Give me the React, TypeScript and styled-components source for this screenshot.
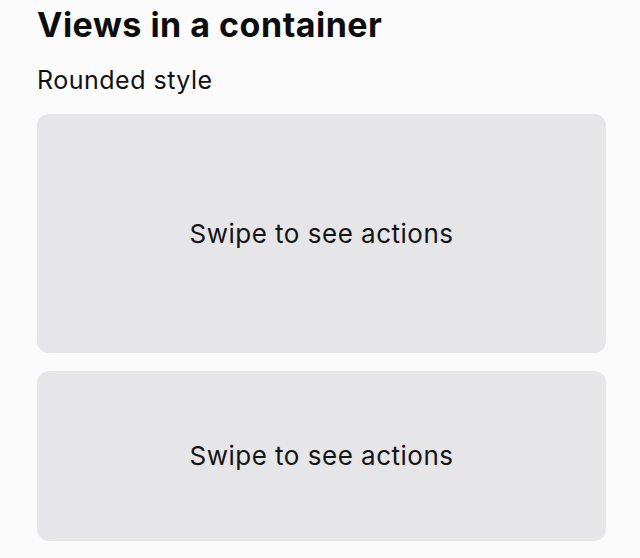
import React from "react";
import styled, { createGlobalStyle } from "styled-components";

const Global = createGlobalStyle`
  html, body {
    margin: 0;
    padding: 0;
    background: #fbfbfb;
  }
  body {
    font-family: Inter, "Noto Sans", sans-serif;
    color: #111111;
  }
`;

const Page = styled.div`
  display: flex;
  flex-direction: column;
  padding: 5px 34px 0 37px;
  box-sizing: border-box;
  width: 640px;
`;

const Title = styled.h1`
  margin: 0;
  font-size: 34px;
  font-weight: 700;
  letter-spacing: 0.5px;
  line-height: 40px;
  color: #0d0d0d;
`;

const Subtitle = styled.h2`
  margin: 20px 0 0;
  font-size: 25px;
  font-weight: 400;
  line-height: 30px;
  letter-spacing: 0.5px;
  color: #111;
`;

const List = styled.div`
  display: flex;
  flex-direction: column;
  gap: 18px;
  margin-top: 19px;
`;

const Card = styled.div<{ $height: number }>`
  height: ${(p) => p.$height}px;
  background: #e6e5e8;
  border-radius: 12px;
  display: flex;
  align-items: center;
  justify-content: center;
`;

const CardText = styled.span`
  font-size: 26px;
  font-weight: 400;
  letter-spacing: 0.5px;
  line-height: 30px;
  color: #141414;
`;

export default function App() {
  return (
    <>
      <Global />
      <Page>
        <Title>Views in a container</Title>
        <Subtitle>Rounded style</Subtitle>
        <List>
          <Card $height={239}>
            <CardText>Swipe to see actions</CardText>
          </Card>
          <Card $height={170}>
            <CardText>Swipe to see actions</CardText>
          </Card>
        </List>
      </Page>
    </>
  );
}
